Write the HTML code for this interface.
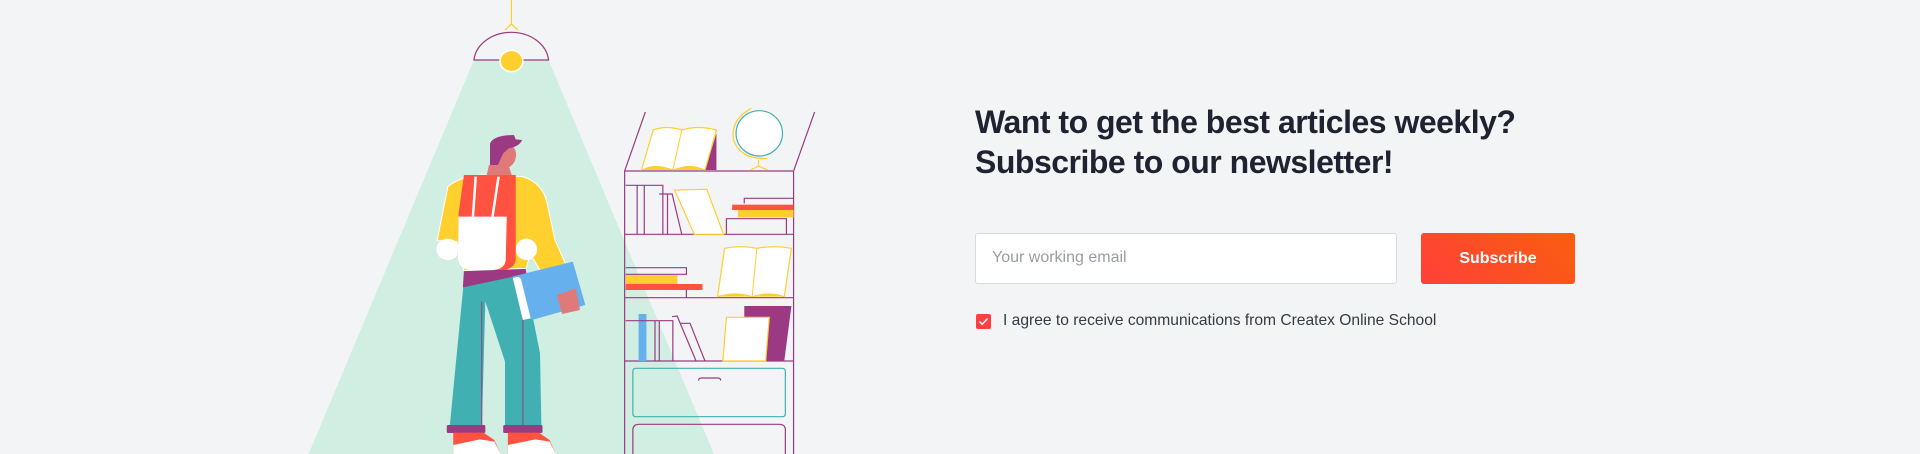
<!DOCTYPE html>
<html><head><meta charset="utf-8">
<style>
html,body{margin:0;padding:0;}
body{width:1920px;height:454px;background:#f3f4f6;position:relative;overflow:hidden;font-family:"Liberation Sans",sans-serif;}
h2{position:absolute;left:975px;top:102px;margin:0;font-size:32px;line-height:40px;font-weight:700;color:#1f2230;letter-spacing:-0.5px;}
.inp{position:absolute;left:975px;top:233px;width:420px;height:49px;background:#fff;border:1px solid #d9dbe0;border-radius:3px;}
.inp span{position:absolute;left:16px;top:15px;font-size:16px;color:#9a9ca5;}
.btn{position:absolute;left:1421px;top:233px;width:154px;height:51px;border-radius:3px;background:linear-gradient(45deg,#ff4039,#f95e0f);color:#fff;font-weight:700;font-size:16px;text-align:center;line-height:51px;}
.cb{position:absolute;left:976px;top:314px;width:15px;height:15px;background:#ff4040;border-radius:2px;}
.lbl{position:absolute;left:1003px;top:312px;font-size:15.6px;color:#363a45;}
svg.ill{position:absolute;left:0;top:0;}
.s{fill:none;stroke:#9b3a82;stroke-width:1.2;vector-effect:non-scaling-stroke}
.y{fill:#fff;stroke:#ffcf2e;stroke-width:1.2;vector-effect:non-scaling-stroke}
</style></head><body>
<svg class="ill" width="960" height="454" viewBox="0 0 960 454">
<g transform="translate(280,0) scale(0.35714,0.33333)">
<polygon points="543,180 752,180 1215,1362 80,1362" fill="#d0efe2"/>
<line x1="648" y1="0" x2="648" y2="75" stroke="#ffcf2e" stroke-width="1.2" vector-effect="non-scaling-stroke"/>
<polyline points="630,90 648,72 666,90" fill="none" stroke="#ffcf2e" stroke-width="1.2" vector-effect="non-scaling-stroke"/>
<path d="M543,180 A105,92 0 0 1 752,180 Z" class="s" stroke-width="1.5"/>
<circle cx="648" cy="183" r="32" fill="#ffcf2e" stroke="#fff" stroke-width="1.5" vector-effect="non-scaling-stroke"/>
<!-- legs -->
<polygon points="515,840 680,800 728,1060 732,1282 630,1282 630,1085 575,905 565,1282 475,1282" fill="#41b0b3"/>
<path d="M565,1282 L565,905 M680,800 L680,1282" stroke="#9b3a82" stroke-width="1" fill="none" vector-effect="non-scaling-stroke"/>
<polygon points="515,812 685,785 690,822 512,862" fill="#9b3a82"/>
<!-- torso & arms -->
<path d="M470,560 Q500,532 560,525 L680,530 Q740,550 750,620 L770,720 L828,862 L770,885 L700,760 L690,805 L515,812 L495,725 L440,722 Z" fill="#ffd02e" stroke="#fff" stroke-width="1" vector-effect="non-scaling-stroke"/>
<ellipse cx="470" cy="748" rx="32" ry="32" fill="#fff"/>
<ellipse cx="690" cy="748" rx="30" ry="32" fill="#fff"/>
<!-- head -->
<polygon points="585,495 640,495 650,530 578,530" fill="#e07a7a"/>
<ellipse cx="628" cy="465" rx="33" ry="40" fill="#e07a7a"/>
<path d="M588,495 L588,430 Q600,405 655,405 L660,418 L678,420 Q670,440 640,445 L625,460 L610,495 Z" fill="#9b3a82"/>
<!-- backpack -->
<path d="M515,525 L660,525 L660,780 Q655,810 620,810 L530,810 Q500,805 498,770 L500,640 Z" fill="#ff5240"/>
<path d="M500,650 L635,650 L632,780 Q630,808 595,810 L530,810 Q498,805 498,770 Z" fill="#fff"/>
<path d="M548,530 L538,685 M612,530 L590,685" stroke="#fff" stroke-width="2.5" vector-effect="non-scaling-stroke"/>
<!-- book & hand -->
<polygon points="650,830 820,785 855,915 705,960" fill="#66b0ee"/>
<path d="M652,835 Q668,825 675,838 L702,955 L680,960 Z" fill="#fff"/>
<path d="M775,885 L828,865 L840,930 L790,942 Z" fill="#e07a7a"/>
<!-- cuffs & shoes -->
<rect x="467" y="1275" width="108" height="24" rx="4" fill="#9b3a82"/>
<rect x="625" y="1275" width="110" height="24" rx="4" fill="#9b3a82"/>
<path d="M485,1298 L570,1298 L600,1320 L618,1362 L485,1362 Z" fill="#ff5240"/>
<path d="M485,1335 L560,1318 L600,1325 L618,1362 L485,1362 Z" fill="#fff"/>
<path d="M638,1298 L725,1298 L755,1320 L772,1362 L638,1362 Z" fill="#ff5240"/>
<path d="M638,1335 L715,1318 L755,1325 L772,1362 L638,1362 Z" fill="#fff"/>
<!-- shelf -->
<path class="s" d="M1023,336 L965,513 L965,1362 M1497,336 L1438,513 L1438,1362 M965,513 L1438,513 M965,703 L1438,703 M965,893 L1438,893 M965,1083 L1438,1083"/>
<rect x="988" y="1105" width="427" height="145" rx="8" fill="none" stroke="#41b0b3" stroke-width="1.2" vector-effect="non-scaling-stroke"/>
<path class="s" d="M1172,1142 Q1172,1134 1180,1134 L1226,1134 Q1234,1134 1234,1142"/>
<path class="s" d="M988,1362 L988,1290 Q988,1273 1005,1273 L1398,1273 Q1415,1273 1415,1290 L1415,1362"/>
<!-- top books & globe -->
<polygon points="1190,510 1222,400 1222,510" fill="#9b3a82"/>
<path class="y" d="M1012,510 L1045,390 Q1080,375 1125,390 Q1170,375 1222,390 L1190,510 Q1150,495 1100,510 Q1060,495 1012,510 Z"/>
<path d="M1012,510 Q1050,485 1100,510 Q1150,485 1190,510 Z" fill="#ffcf2e"/>
<path d="M1125,390 L1100,510" stroke="#ffcf2e" stroke-width="1" vector-effect="non-scaling-stroke"/>
<path d="M1320,325 Q1260,360 1270,420 Q1290,480 1365,475 M1340,480 L1340,500 M1318,510 L1340,498 L1365,510" fill="none" stroke="#ffcf2e" stroke-width="1.2" vector-effect="non-scaling-stroke"/>
<ellipse cx="1342" cy="400" rx="65" ry="68" fill="#fff" stroke="#41b0b3" stroke-width="1.2" vector-effect="non-scaling-stroke"/>
<!-- shelf 1 -->
<path class="s" d="M968,556 L1072,556 L1072,703 M1000,556 L1000,703 M1020,556 L1020,703 M1062,582 L1098,582 L1125,703 M1085,582 L1085,703 M1250,703 L1250,656 L1418,656 L1418,703 M1300,610 L1300,595 L1438,595" fill="#fff"/>
<path class="y" d="M1105,570 L1195,568 L1242,703 L1160,703 Z"/>
<rect x="1266" y="614" width="172" height="16" fill="#ff5240"/>
<rect x="1282" y="630" width="156" height="22" fill="#ffcf2e"/>
<!-- shelf 2 -->
<path class="s" d="M968,803 L1138,803 L1138,823 L968,823 M1138,870 L1138,893"/>
<rect x="968" y="825" width="145" height="28" fill="#ffcf2e"/>
<rect x="968" y="852" width="215" height="18" fill="#ff5240"/>
<path class="y" d="M1225,890 L1245,745 Q1290,735 1335,745 Q1385,735 1432,745 L1412,890 Q1370,875 1322,890 Q1275,875 1225,890 Z"/>
<path d="M1225,890 Q1275,870 1322,890 Q1370,870 1412,890 Z" fill="#ffcf2e"/>
<path d="M1335,745 L1322,890" stroke="#ffcf2e" stroke-width="1" vector-effect="non-scaling-stroke"/>
<!-- shelf 3 -->
<rect x="1004" y="942" width="22" height="141" fill="#66b0ee"/>
<path class="s" d="M968,962 L1100,962 L1100,1083 M1050,962 L1050,1083 M1062,962 L1062,1083 M1098,950 L1112,948 L1165,1083 M1120,970 L1148,970 L1190,1083"/>
<polygon points="1300,918 1432,918 1412,1083 1300,1083" fill="#9b3a82"/>
<path class="y" d="M1250,952 L1370,952 L1360,1083 L1240,1083 Z"/>
</g>
</svg>
<h2>Want to get the best articles weekly?<br>Subscribe to our newsletter!</h2>
<div class="inp"><span>Your working email</span></div>
<div class="btn">Subscribe</div>
<div class="cb"><svg width="15" height="15" viewBox="0 0 15 15"><path d="M3.5,7.5 L6.3,10.3 L11.5,4.5" fill="none" stroke="#fff" stroke-width="1.5"/></svg></div>
<div class="lbl">I agree to receive communications from Createx Online School</div>
</body></html>
